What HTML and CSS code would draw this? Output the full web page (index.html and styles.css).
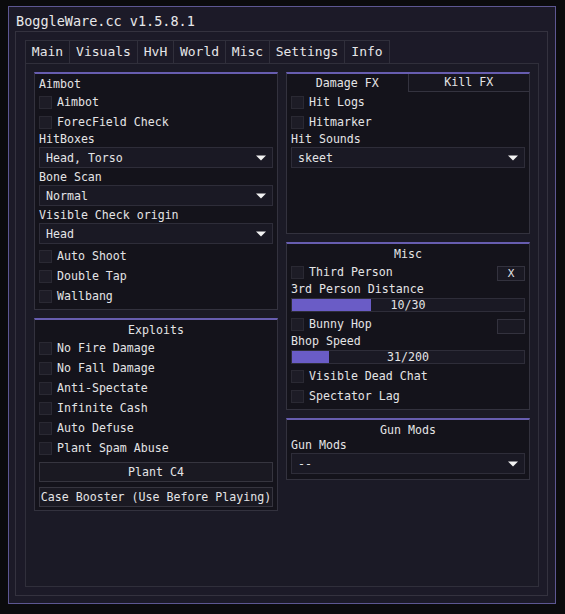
FILE: index.html
```html
<!DOCTYPE html>
<html>
<head>
<meta charset="utf-8">
<link rel="stylesheet" href="styles.css">
</head>
<body>
<div class="window">
  <div class="title">BoggleWare.cc v1.5.8.1</div>
  <div class="child">
    <div class="tabs">
      <div class="tab active w-main">Main</div>
      <div class="tab w-visuals">Visuals</div>
      <div class="tab w-hvh">HvH</div>
      <div class="tab w-world">World</div>
      <div class="tab w-misc">Misc</div>
      <div class="tab w-settings">Settings</div>
      <div class="tab w-info">Info</div>
    </div>
    <div class="panel">
      <div class="col">
        <section class="group">
          <div class="label">Aimbot</div>
          <div class="check"><span class="box"></span>Aimbot</div>
          <div class="check"><span class="box"></span>ForecField Check</div>
          <div class="label">HitBoxes</div>
          <div class="dd"><span>Head, Torso</span><svg class="arrow" width="10" height="6" viewBox="0 0 10 6"><polygon points="0,0.5 10,0.5 5,5.5" fill="#f2f2f2"/></svg></div>
          <div class="label">Bone Scan</div>
          <div class="dd"><span>Normal</span><svg class="arrow" width="10" height="6" viewBox="0 0 10 6"><polygon points="0,0.5 10,0.5 5,5.5" fill="#f2f2f2"/></svg></div>
          <div class="label">Visible Check origin</div>
          <div class="dd"><span>Head</span><svg class="arrow" width="10" height="6" viewBox="0 0 10 6"><polygon points="0,0.5 10,0.5 5,5.5" fill="#f2f2f2"/></svg></div>
          <div class="check"><span class="box"></span>Auto Shoot</div>
          <div class="check"><span class="box"></span>Double Tap</div>
          <div class="check"><span class="box"></span>Wallbang</div>
        </section>
        <section class="group">
          <div class="gtitle">Exploits</div>
          <div class="check"><span class="box"></span>No Fire Damage</div>
          <div class="check"><span class="box"></span>No Fall Damage</div>
          <div class="check"><span class="box"></span>Anti-Spectate</div>
          <div class="check"><span class="box"></span>Infinite Cash</div>
          <div class="check"><span class="box"></span>Auto Defuse</div>
          <div class="check"><span class="box"></span>Plant Spam Abuse</div>
          <div class="btn btn-first">Plant C4</div>
          <div class="btn btn-second">Case Booster (Use Before Playing)</div>
        </section>
      </div>
      <div class="col">
        <section class="group fx">
          <div class="subtabs">
            <div class="subtab on">Damage FX</div>
            <div class="subtab off">Kill FX</div>
          </div>
          <div class="gbody">
            <div class="check"><span class="box"></span>Hit Logs</div>
            <div class="check"><span class="box"></span>Hitmarker</div>
            <div class="label">Hit Sounds</div>
            <div class="dd"><span>skeet</span><svg class="arrow" width="10" height="6" viewBox="0 0 10 6"><polygon points="0,0.5 10,0.5 5,5.5" fill="#f2f2f2"/></svg></div>
          </div>
        </section>
        <section class="group">
          <div class="gtitle">Misc</div>
          <div class="check"><span class="box"></span>Third Person<span class="kbtn kx">X</span></div>
          <div class="label">3rd Person Distance</div>
          <div class="slider"><div class="fill" style="width:34%"></div><div class="sval">10/30</div></div>
          <div class="check"><span class="box"></span>Bunny Hop<span class="kbtn kempty"></span></div>
          <div class="label">Bhop Speed</div>
          <div class="slider"><div class="fill" style="width:16%"></div><div class="sval">31/200</div></div>
          <div class="check"><span class="box"></span>Visible Dead Chat</div>
          <div class="check"><span class="box"></span>Spectator Lag</div>
        </section>
        <section class="group">
          <div class="gtitle">Gun Mods</div>
          <div class="label">Gun Mods</div>
          <div class="dd"><span>--</span><svg class="arrow" width="10" height="6" viewBox="0 0 10 6"><polygon points="0,0.5 10,0.5 5,5.5" fill="#f2f2f2"/></svg></div>
        </section>
      </div>
    </div>
  </div>
</div>
</body>
</html>
```

FILE: styles.css
```css
* { box-sizing: border-box; }

html, body {
  margin: 0;
  padding: 0;
  background: #0b0b0d;
}

body {
  font-family: "DejaVu Sans Mono", "Liberation Mono", monospace;
  color: #e4e4e6;
  font-size: 11.6px;
}

.window {
  margin: 6px 0 0 8px;
  width: 548px;
  height: 598px;
  border: 1px solid #5d5792;
  background: #1c1a28;
  display: flex;
  flex-direction: column;
}

.title {
  height: 24px;
  padding: 6px 0 0 7px;
  font-size: 13.5px;
  line-height: 16px;
  color: #e8e8ea;
}

.child {
  margin-left: 6px;
  width: 533px;
  height: 565px;
  border: 1px solid #34323f;
  padding: 8px 7px 7px 9px;
  display: flex;
  flex-direction: column;
}

.tabs {
  display: flex;
  height: 23px;
}

.tab {
  height: 23px;
  border: 1px solid #302f3b;
  border-left: none;
  border-bottom: none;
  background: #1c1a27;
  font-size: 13px;
  line-height: 22px;
  text-align: center;
  color: #e6e6e8;
}
.tab.active { border-left: 1px solid #302f3b; background: #1a1925; }
.w-main { width: 45px; }
.w-visuals { width: 68px; }
.w-hvh { width: 36px; }
.w-world { width: 52px; }
.w-misc { width: 44px; }
.w-settings { width: 75px; }
.w-info { width: 45px; }

.panel {
  width: 514px;
  height: 524px;
  border: 1px solid #302f3b;
  padding: 8px;
  display: flex;
  gap: 8px;
  background: #1b1a26;
}

.col {
  width: 244px;
  display: flex;
  flex-direction: column;
  gap: 8px;
}

.group {
  background: #14131b;
  border: 1px solid #33323e;
  border-top: 2px solid #675db0;
  padding: 3px 4px 3px 4px;
  display: flex;
  flex-direction: column;
}

.group.fx {
  height: 162px;
  padding: 0;
}

.gbody {
  padding: 0 4px;
  display: flex;
  flex-direction: column;
}

.label {
  height: 15px;
  line-height: 15px;
  white-space: nowrap;
}

.gtitle {
  height: 15px;
  line-height: 15px;
  text-align: center;
}

.check {
  height: 20px;
  display: flex;
  align-items: center;
  gap: 5px;
  white-space: nowrap;
}

.box {
  width: 13px;
  height: 13px;
  flex: none;
  background: #1d1c26;
  border: 1px solid #2a2933;
}

.kbtn {
  margin-left: auto;
  align-self: flex-start;
  width: 28px;
  height: 15px;
  border: 1px solid #33323e;
  background: #1a1923;
  text-align: center;
  line-height: 13px;
  font-size: 11px;
}
.kx { margin-top: 4px; }
.kempty { margin-top: 5px; }

.dd {
  height: 21px;
  margin-bottom: 2px;
  border: 1px solid #2e2d39;
  background: #1a1924;
  display: flex;
  align-items: center;
  justify-content: space-between;
  padding: 0 6px 0 6px;
  white-space: nowrap;
}
.arrow { display: block; }

.slider {
  height: 14px;
  margin: 1px 0 2px;
  border: 1px solid #2e2d39;
  background: #1a1924;
  display: grid;
}
.fill {
  grid-area: 1 / 1;
  height: 100%;
  background: #6a5cc6;
}
.sval {
  grid-area: 1 / 1;
  text-align: center;
  line-height: 12px;
}

.btn {
  height: 20px;
  border: 1px solid #36353f;
  background: #1a1922;
  text-align: center;
  line-height: 18px;
  white-space: nowrap;
}
.btn-first { margin-top: 4px; }
.btn-second { margin-top: 5px; }

.subtabs {
  display: flex;
  height: 18px;
}
.subtab {
  flex: 1;
  text-align: center;
  line-height: 18px;
}
.subtab.on { background: #14131b; }
.subtab.off {
  background: #17161f;
  border-left: 1px solid #34333f;
  border-bottom: 1px solid #34333f;
  line-height: 17px;
}
```
